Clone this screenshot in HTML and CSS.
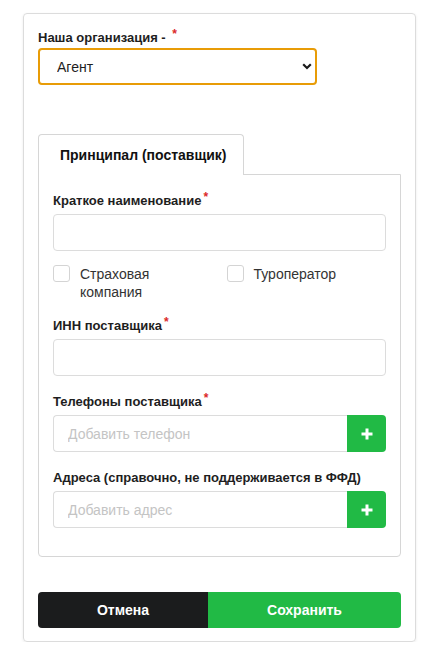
FILE: index.html
```html
<!DOCTYPE html>
<html lang="ru">
<head>
    <meta charset="UTF-8">
    <meta name="viewport" content="width=device-width, initial-scale=1.0">
    <title>Поставщик</title>
    <link rel="stylesheet" href="styles.css">
</head>
<body>

    <div class="card">
        <label class="field-label">Наша организация - <span class="req req-spaced">*</span></label>
        <div class="select-wrap">
            <select class="org-select">
                <option>Агент</option>
            </select>
            <svg class="chevron" width="10" height="7" viewBox="0 0 10 7">
                <path d="M1.2 1.3 L5 5 L8.8 1.3" fill="none" stroke="#1a1a1a" stroke-width="2.2"/>
            </svg>
        </div>

        <div class="tabs">
            <div class="tab active">Принципал (поставщик)</div>
        </div>

        <div class="tab-panel">
            <div class="field">
                <label class="field-label">Краткое наименование<span class="req">*</span></label>
                <input class="text-input" type="text">
            </div>

            <div class="check-row">
                <label class="check">
                    <span class="box"></span>
                    <span class="check-text">Страховая компания</span>
                </label>
                <label class="check">
                    <span class="box"></span>
                    <span class="check-text">Туроператор</span>
                </label>
            </div>

            <div class="field">
                <label class="field-label">ИНН поставщика<span class="req">*</span></label>
                <input class="text-input" type="text">
            </div>

            <div class="field">
                <label class="field-label">Телефоны поставщика<span class="req">*</span></label>
                <div class="input-group">
                    <input class="text-input" type="text" placeholder="Добавить телефон">
                    <button class="add-btn" type="button">
                        <svg width="12" height="12" viewBox="0 0 12 12"><path d="M6 0.5 V11.5 M0.5 6 H11.5" stroke="#fff" stroke-width="3"/></svg>
                    </button>
                </div>
            </div>

            <div class="field last">
                <label class="field-label">Адреса (справочно, не поддерживается в ФФД)</label>
                <div class="input-group">
                    <input class="text-input" type="text" placeholder="Добавить адрес">
                    <button class="add-btn" type="button">
                        <svg width="12" height="12" viewBox="0 0 12 12"><path d="M6 0.5 V11.5 M0.5 6 H11.5" stroke="#fff" stroke-width="3"/></svg>
                    </button>
                </div>
            </div>
        </div>

        <div class="actions">
            <button class="btn btn-cancel" type="button">Отмена</button>
            <button class="btn btn-save" type="button">Сохранить</button>
        </div>
    </div>

</body>
</html>
```

FILE: styles.css
```css
body {
    font-family: "Liberation Sans", Arial, sans-serif;
    background-color: #ffffff;
    margin: 0;
    padding: 13px 21px 0 23px;
    color: #1e1e1e;
}

.card {
    border: 1px solid #dcdcdc;
    border-radius: 4px;
    padding: 15px 14px 13px 14px;
    box-shadow: 0 1px 3px rgba(0, 0, 0, 0.08);
}

.field-label {
    display: block;
    font-size: 13px;
    font-weight: bold;
    line-height: 17px;
    color: #1e1e1e;
    margin-bottom: 2px;
}

.req {
    color: #db2828; /* звёздочка обязательного поля */
    font-size: 12px;
    vertical-align: top;
    position: relative;
    top: -3px;
    margin-left: 2px;
}

.req-spaced {
    margin-left: 3px;
}

.select-wrap {
    position: relative;
    width: 279px;
}

.org-select {
    appearance: none;
    -webkit-appearance: none;
    width: 100%;
    height: 37px;
    border: 2px solid #e89c07; /* оранжевая рамка фокуса */
    border-radius: 4px;
    background-color: #ffffff;
    padding: 0 30px 0 17px;
    font-family: "Liberation Sans", Arial, sans-serif;
    font-size: 14px;
    color: #1e1e1e;
    outline: none;
}

.chevron {
    position: absolute;
    right: 5px;
    top: 15px;
    pointer-events: none;
}

.tabs {
    display: flex;
    margin-top: 49px;
}

.tab {
    border: 1px solid #d6d6d6;
    border-bottom: none;
    border-radius: 4px 4px 0 0;
    background-color: #ffffff;
    margin-bottom: -1px;
    position: relative;
    padding-left: 21px;
    box-sizing: border-box;
    width: 206px;
    height: 41px;
    line-height: 40px;
    font-size: 14px;
    font-weight: bold;
    color: #111111;
}

.tab-panel {
    border: 1px solid #d6d6d6;
    border-radius: 0 0 4px 4px;
    padding: 17px 14px 28px 14px;
}

.field {
    margin-bottom: 17px;
}

.field .field-label {
    margin-bottom: 5px;
}

.field.last {
    margin-bottom: 0;
}

.text-input {
    display: block;
    width: 100%;
    height: 37px;
    box-sizing: border-box;
    border: 1px solid #dcdcdc;
    border-radius: 4px;
    padding: 0 14px;
    font-family: "Liberation Sans", Arial, sans-serif;
    font-size: 14px;
    color: #1e1e1e;
    outline: none;
}

.text-input::placeholder {
    color: #c4c4c4;
}

.input-group {
    display: flex;
}

.input-group .text-input {
    flex: 1;
    border-radius: 4px 0 0 4px;
    border-right: none;
}

.add-btn {
    flex: 0 0 39px;
    height: 37px;
    border: none;
    border-radius: 0 4px 4px 0;
    background-color: #21ba45; /* зелёная кнопка добавления */
    display: flex;
    align-items: center;
    justify-content: center;
    padding: 0;
    cursor: pointer;
}

.check-row {
    display: grid;
    grid-template-columns: 1fr 1fr;
    column-gap: 14px;
    margin-top: -3px;
    margin-bottom: 16px;
}

.check {
    display: flex;
    align-items: flex-start;
    gap: 10px;
    cursor: pointer;
}

.box {
    flex: 0 0 17px;
    height: 17px;
    box-sizing: border-box;
    border: 1px solid #d4d4d4;
    border-radius: 3px;
    background-color: #ffffff;
}

.check-text {
    font-size: 14px;
    line-height: 18px;
    color: #333333;
    max-width: 110px;
}

.actions {
    display: flex;
    margin-top: 35px;
}

.btn {
    height: 36px;
    border: none;
    font-family: "Liberation Sans", Arial, sans-serif;
    font-size: 14px;
    font-weight: bold;
    color: #ffffff;
    cursor: pointer;
}

.btn-cancel {
    flex: 0 0 170px;
    background-color: #1b1c1d;
    border-radius: 4px 0 0 4px;
}

.btn-save {
    flex: 1;
    background-color: #21ba45;
    border-radius: 0 4px 4px 0;
}
```
